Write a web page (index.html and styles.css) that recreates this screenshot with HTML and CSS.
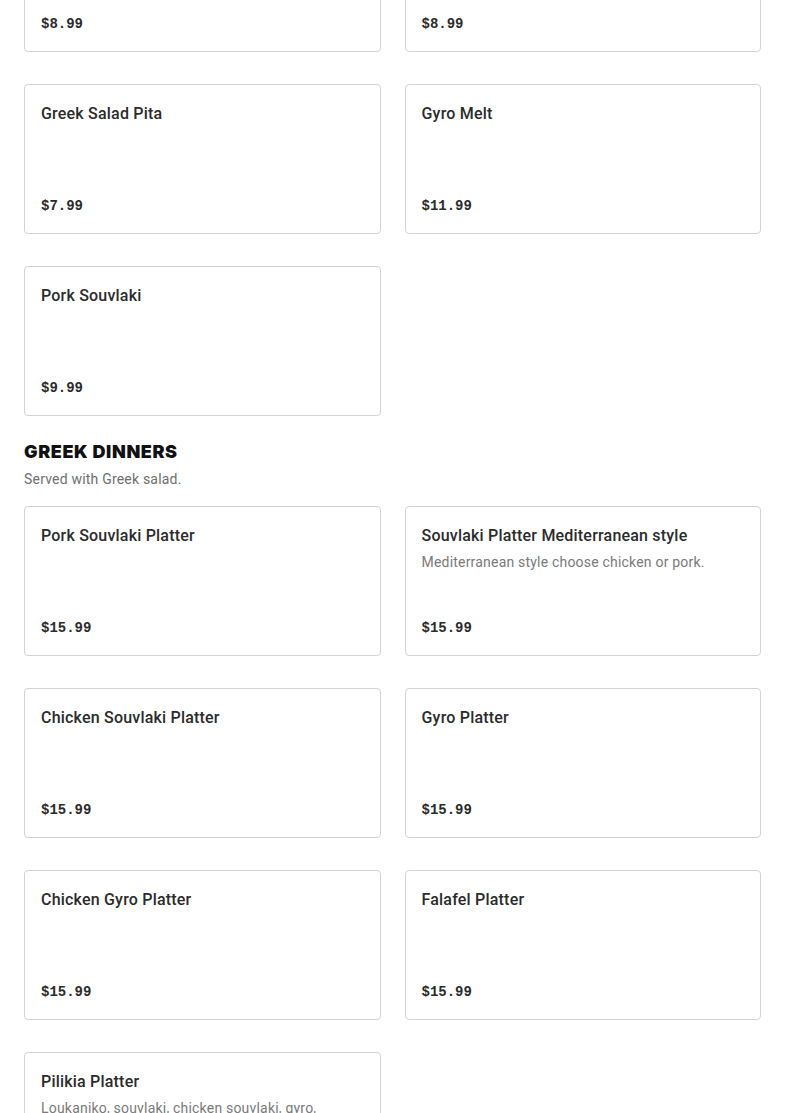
FILE: index.html
```html
<!DOCTYPE html>
<html lang="en">
  <head>
    <meta charset="UTF-8" />
    <meta name="viewport" content="width=device-width, initial-scale=1.0" />
    <title>Menu</title>
    <link rel="stylesheet" href="styles.css">
  </head>
  <body>
    <div class="menu">
      <section class="menu-section">
        <div class="items">
          <div class="item">
            <h4>Chicken Gyro Pita</h4>
            <span class="price">$8.99</span>
          </div>
          <div class="item">
            <h4>Gyro Pita</h4>
            <span class="price">$8.99</span>
          </div>
          <div class="item">
            <h4>Greek Salad Pita</h4>
            <span class="price">$7.99</span>
          </div>
          <div class="item">
            <h4>Gyro Melt</h4>
            <span class="price">$11.99</span>
          </div>
          <div class="item">
            <h4>Pork Souvlaki</h4>
            <span class="price">$9.99</span>
          </div>
        </div>
      </section>

      <section class="menu-section">
        <h2>GREEK DINNERS</h2>
        <p class="section-note">Served with Greek salad.</p>
        <div class="items">
          <div class="item">
            <h4>Pork Souvlaki Platter</h4>
            <span class="price">$15.99</span>
          </div>
          <div class="item">
            <h4>Souvlaki Platter Mediterranean style</h4>
            <p class="desc">Mediterranean style choose chicken or pork.</p>
            <span class="price">$15.99</span>
          </div>
          <div class="item">
            <h4>Chicken Souvlaki Platter</h4>
            <span class="price">$15.99</span>
          </div>
          <div class="item">
            <h4>Gyro Platter</h4>
            <span class="price">$15.99</span>
          </div>
          <div class="item">
            <h4>Chicken Gyro Platter</h4>
            <span class="price">$15.99</span>
          </div>
          <div class="item">
            <h4>Falafel Platter</h4>
            <span class="price">$15.99</span>
          </div>
          <div class="item">
            <h4>Pilikia Platter</h4>
            <p class="desc">Loukaniko, souvlaki, chicken souvlaki, gyro, spanakopita and falafel.</p>
            <span class="price">$24.99</span>
          </div>
        </div>
      </section>
    </div>
  </body>
</html>
```

FILE: styles.css
```css
body {
  margin: 0;
  font-family: Roboto, "Liberation Sans", Arial, sans-serif;
  color: #2b2b2b;
  background-color: #fff;
}
.menu {
  padding: 0 24px;
  margin-top: -98px;
}
.menu-section {
  margin-bottom: 24px;
}
.menu-section h2 {
  margin: 0;
  font-family: Inter, "Liberation Sans", sans-serif;
  font-weight: 900;
  font-size: 18px;
  line-height: 24px;
  letter-spacing: 0.6px;
  color: #111;
}
.section-note {
  margin: 3px 0 15px;
  font-size: 14px;
  line-height: 24px;
  letter-spacing: 0.2px;
  color: #6f6f6f;
}
.items {
  display: grid;
  grid-template-columns: 1fr 1fr;
  gap: 32px 24px;
}
.item {
  display: flex;
  flex-direction: column;
  min-height: 150px;
  box-sizing: border-box;
  padding: 17px 16px 15px;
  border: 1px solid #d3d3d3;
  border-radius: 4px;
}
.item h4 {
  margin: 0;
  font-size: 16px;
  font-weight: 500;
  line-height: 24px;
  letter-spacing: 0.2px;
  color: #2b2b2b;
}
.item .desc {
  margin: 4px 0 0;
  font-size: 14px;
  line-height: 20px;
  letter-spacing: 0.2px;
  color: #7a7a7a;
}
.price {
  margin-top: auto;
  font-family: "Liberation Mono", "DejaVu Sans Mono", monospace;
  font-weight: bold;
  font-size: 14px;
  line-height: 24px;
  color: #2b2b2b;
}
```
